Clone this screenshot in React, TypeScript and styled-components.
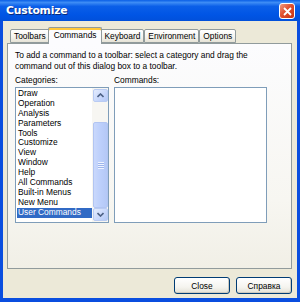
import React from 'react'
import styled, {createGlobalStyle} from 'styled-components'

const GlobalStyle = createGlobalStyle`
  html, body {
    margin: 0;
    padding: 0;
    background: #ffffff;
  }
  * {
    box-sizing: border-box;
  }
`

const font = `"Liberation Sans", Tahoma, Arial, sans-serif`

const categories = [
    'Draw', 'Operation', 'Analysis', 'Parameters', 'Tools', 'Customize', 'View',
    'Window', 'Help', 'All Commands', 'Built-in Menus', 'New Menu', 'User Commands',
]

const tabs = ['Toolbars', 'Commands', 'Keyboard', 'Environment', 'Options']

const Window = styled.div`
  width: 300px;
  height: 302px;
  display: flex;
  flex-direction: column;
  background: #0a4edf;
  font-family: ${font};
  font-size: 8.4px;
  color: #000;
  overflow: hidden;
`

const TitleBar = styled.div`
  height: 21px;
  flex-shrink: 0;
  display: flex;
  align-items: center;
  justify-content: space-between;
  padding: 0 5px 0 6px;
  background: linear-gradient(to bottom, #0a5fe6 0%, #3d8cf5 12%, #0b5fe8 30%, #0055e5 70%, #0150da 100%);
`

const Title = styled.span`
  color: #fff;
  font-family: "DejaVu Sans", sans-serif;
  font-weight: bold;
  font-size: 10.8px;
  letter-spacing: -0.2px;
  text-shadow: 1px 1px 0 #0a2a7a;
`

const CloseBox = styled.div`
  width: 16px;
  height: 16px;
  margin-top: 1px;
  border: 1px solid #fff;
  border-radius: 3px;
  background: linear-gradient(135deg, #f19a80 0%, #e0502f 45%, #c53313 100%);
  display: flex;
  align-items: center;
  justify-content: center;
`

const Body = styled.div`
  flex: 1;
  margin: 0 3px 4px 3px;
  background: #ece9d8;
  display: flex;
  flex-direction: column;
  padding: 6px 5px 0 4px;
`

const TabRow = styled.div`
  display: flex;
  align-items: flex-end;
  height: 16px;
  padding-left: 3px;
  position: relative;
  z-index: 1;
`

const Tab = styled.div<{$active?: boolean}>`
  height: ${p => p.$active ? 17 : 14}px;
  margin: ${p => p.$active ? '0 -2px -1px -2px' : '0'};
  padding: ${p => p.$active ? '2px 5px 0' : '1px 3px 0'};
  border: 1px solid #919b9c;
  border-bottom: ${p => p.$active ? 'none' : '1px solid #919b9c'};
  border-radius: 2px 2px 0 0;
  background: ${p => p.$active ? '#fcfcfe' : 'linear-gradient(to bottom, #ffffff 0%, #f4f3ee 60%, #e6e3d6 100%)'};
  box-shadow: ${p => p.$active ? 'inset 0 2px 0 #ffc83c, inset 0 1px 0 #e68b2c' : 'none'};
  position: relative;
  z-index: ${p => p.$active ? 2 : 1};
  white-space: nowrap;
  line-height: 11px;
  text-align: center;
`

const Pane = styled.div`
  height: 226px;
  border: 1px solid #919b9c;
  background: linear-gradient(to bottom, #fcfcfe 0%, #f7f6f1 70%, #f1efe6 100%);
  padding: 6px 7px 0 7px;
  display: flex;
  flex-direction: column;
`

const Hint = styled.p`
  margin: 0 0 3px 0;
  line-height: 11px;
  width: 250px;
`

const Columns = styled.div`
  display: grid;
  grid-template-columns: 94px 153px;
  column-gap: 5px;
`

const Label = styled.div`
  line-height: 11px;
  height: 12px;
`

const ListFrame = styled.div`
  height: 136px;
  border: 1px solid #7f9db9;
  background: #fff;
  display: flex;
  overflow: hidden;
`

const Items = styled.div`
  flex: 1;
  padding: 1px 0 0 1px;
  overflow: hidden;
`

const Item = styled.div<{$selected?: boolean}>`
  height: 9.9px;
  line-height: 9.9px;
  padding-left: 1px;
  white-space: nowrap;
  background: ${p => p.$selected ? '#316ac5' : 'transparent'};
  color: ${p => p.$selected ? '#fff' : '#000'};
`

const ScrollBar = styled.div`
  width: 16px;
  display: flex;
  flex-direction: column;
  background: #f7f6f2;
  padding: 1px 0 1px 1px;
`

const ArrowButton = styled.div`
  height: 13px;
  border: 1px solid #b9cbf3;
  border-radius: 2px;
  background: linear-gradient(135deg, #e4ecfd 0%, #c6d6fb 60%, #b4c9f7 100%);
  display: flex;
  align-items: center;
  justify-content: center;
  flex-shrink: 0;
`

const Track = styled.div<{$top: number}>`
  flex: 1;
  display: flex;
  flex-direction: column;
  padding-top: ${p => p.$top}px;
`

const Thumb = styled.div`
  flex: 1;
  border: 1px solid #b2c5f2;
  border-radius: 2px;
  background: linear-gradient(to right, #c9d8fc 0%, #bccffb 50%, #b4c8f6 100%);
  display: flex;
  align-items: center;
  justify-content: center;
`

const Grip = styled.div`
  width: 6px;
  height: 7px;
  background: repeating-linear-gradient(to bottom, #eef3fe 0, #eef3fe 1px, #9db5ec 1px, #9db5ec 2px);
`

const CommandBox = styled.div`
  height: 136px;
  border: 1px solid #7f9db9;
  background: #fff;
`

const Footer = styled.div`
  display: flex;
  justify-content: flex-end;
  gap: 6px;
  padding: 8px 0 0 0;
`

const Button = styled.button`
  width: 56px;
  height: 17px;
  font-family: ${font};
  font-size: 8.4px;
  color: #000;
  border: 1px solid #003c74;
  border-radius: 3px;
  background: linear-gradient(to bottom, #ffffff 0%, #f5f4ef 60%, #e3e1d6 100%);
  box-shadow: inset -1px -1px 0 #cdcac0;
  padding: 0;
`

const Chevron = ({up}: {up?: boolean}) => (
    <svg width="7" height="5" viewBox="0 0 7 5">
        <path d={up ? 'M0.5 4 L3.5 1 L6.5 4' : 'M0.5 1 L3.5 4 L6.5 1'} fill="none" stroke="#4d6185" strokeWidth="1.6" />
    </svg>
)

export default function App() {
    return <>
        <GlobalStyle />
        <Window>
            <TitleBar>
                <Title>Customize</Title>
                <CloseBox>
                    <svg width="9" height="9" viewBox="0 0 9 9">
                        <path d="M1 1 L8 8 M8 1 L1 8" stroke="#fff" strokeWidth="1.8" />
                    </svg>
                </CloseBox>
            </TitleBar>
            <Body>
                <TabRow>
                    {tabs.map(t => <Tab key={t} $active={t === 'Commands'}>{t}</Tab>)}
                </TabRow>
                <Pane>
                    <Hint>To add a command to a toolbar: select a category and drag the command out of this dialog box to a toolbar.</Hint>
                    <Columns>
                        <Label>Categories:</Label>
                        <Label>Commands:</Label>
                        <ListFrame>
                            <Items>
                                {categories.map(c => <Item key={c} $selected={c === 'User Commands'}>{c}</Item>)}
                            </Items>
                            <ScrollBar>
                                <ArrowButton><Chevron up /></ArrowButton>
                                <Track $top={20}>
                                    <Thumb><Grip /></Thumb>
                                </Track>
                                <ArrowButton><Chevron /></ArrowButton>
                            </ScrollBar>
                        </ListFrame>
                        <CommandBox />
                    </Columns>
                </Pane>
                <Footer>
                    <Button>Close</Button>
                    <Button>Справка</Button>
                </Footer>
            </Body>
        </Window>
    </>
}
